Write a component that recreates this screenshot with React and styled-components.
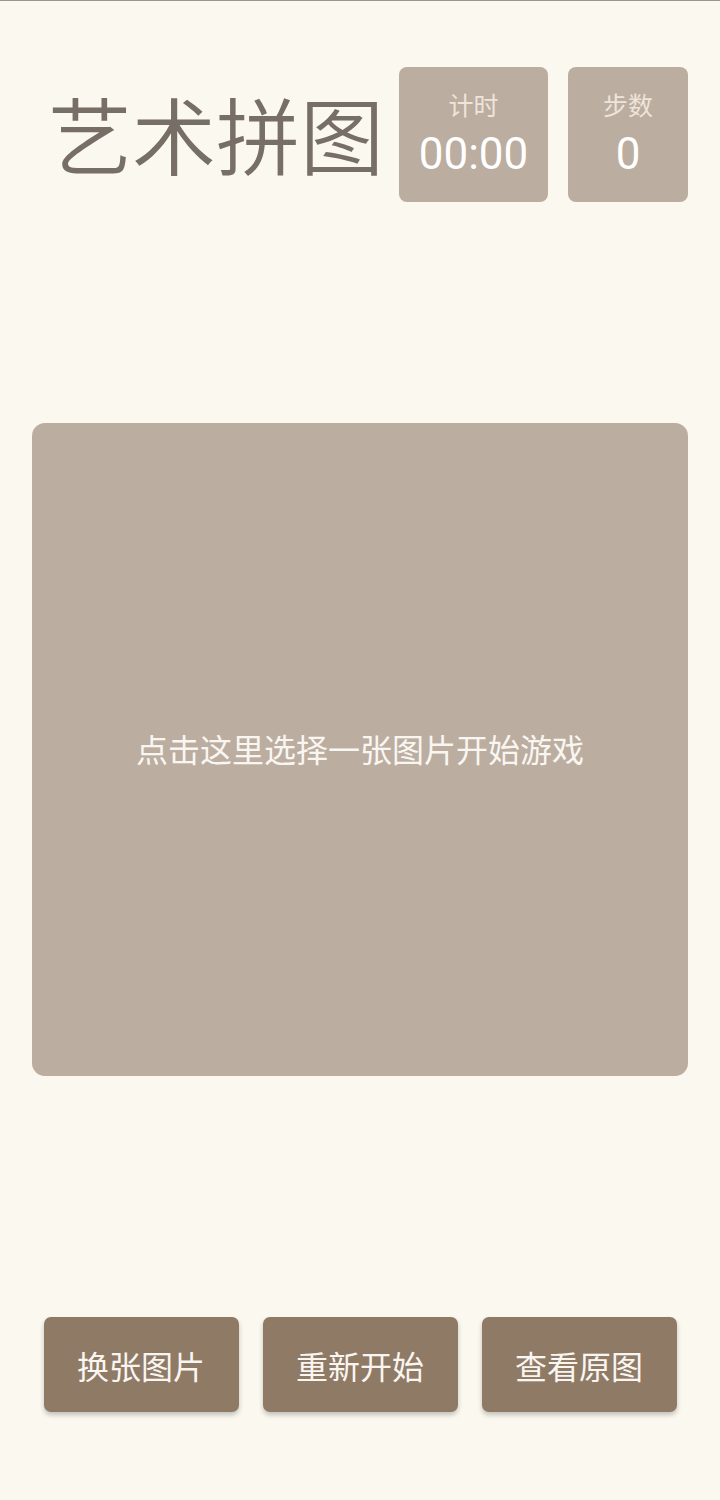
import React from "react";
import styled, { createGlobalStyle } from "styled-components";

const Global = createGlobalStyle`
  html, body { margin: 0; padding: 0; background: #faf8ef; }
  body { font-family: "Noto Sans CJK SC", "Roboto", sans-serif; }
  * { box-sizing: border-box; }
`;

const Page = styled.div`
  min-height: 1500px;
  border-top: 1px solid #9a968f;
  display: flex;
  flex-direction: column;
  padding: 66px 32px 0 32px;
`;

const Header = styled.header`
  display: flex;
  align-items: center;
  justify-content: flex-end;
  gap: 20px;
`;

const Title = styled.h1`
  margin: 0;
  font-family: "Noto Sans CJK SC", sans-serif;
  font-weight: 350;
  font-size: 84px;
  line-height: 1;
  color: #776e65;
  margin-right: -5px;
  padding-bottom: 4px;
`;

const StatBox = styled.div`
  width: ${(p) => p.$w}px;
  height: 135px;
  background: #bbada0;
  border-radius: 8px;
  display: flex;
  flex-direction: column;
  align-items: center;
  justify-content: center;
`;

const StatLabel = styled.div`
  font-size: 25px;
  line-height: 1;
  color: #eee4da;
  margin-top: -2px;
`;

const StatValue = styled.div`
  font-family: "Roboto", sans-serif;
  font-size: 44px;
  line-height: 1;
  color: #ffffff;
  margin-top: 15px;
`;

const Board = styled.div`
  margin-top: 221px;
  width: 656px;
  height: 653px;
  background: #bbada0;
  border-radius: 13px;
  display: flex;
  align-items: center;
  justify-content: center;
  cursor: pointer;
`;

const Hint = styled.div`
  font-size: 32px;
  color: #f9f6f2;
  padding-bottom: 4px;
`;

const Actions = styled.div`
  margin-top: 241px;
  display: flex;
  justify-content: center;
  gap: 24px;
`;

const Button = styled.button`
  width: 195px;
  height: 95px;
  border: none;
  border-radius: 7px;
  background: #8f7a66;
  color: #f9f6f2;
  font-family: "Noto Sans CJK SC", sans-serif;
  font-size: 32px;
  box-shadow: 0 3px 5px rgba(0, 0, 0, 0.22);
  cursor: pointer;
`;

export default function App() {
  return (
    <>
      <Global />
      <Page>
        <Header>
          <Title>艺术拼图</Title>
          <StatBox $w={149}>
            <StatLabel>计时</StatLabel>
            <StatValue>00:00</StatValue>
          </StatBox>
          <StatBox $w={120}>
            <StatLabel>步数</StatLabel>
            <StatValue>0</StatValue>
          </StatBox>
        </Header>
        <Board>
          <Hint>点击这里选择一张图片开始游戏</Hint>
        </Board>
        <Actions>
          <Button>换张图片</Button>
          <Button>重新开始</Button>
          <Button>查看原图</Button>
        </Actions>
      </Page>
    </>
  );
}
